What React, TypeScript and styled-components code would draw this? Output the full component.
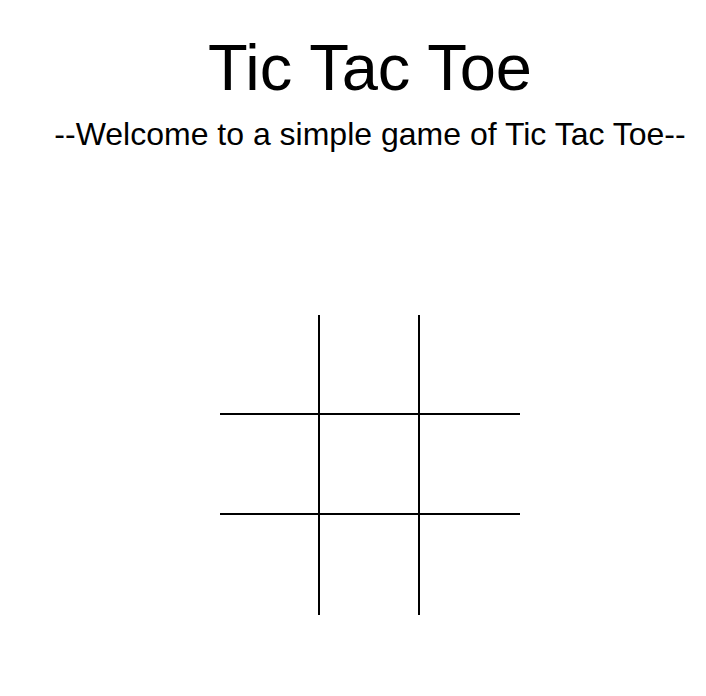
import React from "react";
import styled, { createGlobalStyle } from "styled-components";

const Global = createGlobalStyle`
  html, body { margin: 0; padding: 0; background: #fff; overflow: hidden; }
  body { font-family: "Liberation Sans", Arial, sans-serif; color: #000; }
`;

const Page = styled.div`
  width: 740px;
  display: flex;
  flex-direction: column;
  align-items: center;
  padding-top: 32px;
`;

const Title = styled.h1`
  margin: 0;
  font-size: 65px;
  font-weight: 400;
  line-height: 72px;
`;

const Subtitle = styled.p`
  margin: 12px 0 0;
  font-size: 32px;
  line-height: 36px;
  white-space: nowrap;
`;

const Board = styled.div`
  margin-top: 163px;
  display: grid;
  grid-template-columns: repeat(3, 100px);
  grid-template-rows: repeat(3, 100px);
`;

const Cell = styled.div<{ $right: boolean; $bottom: boolean }>`
  box-sizing: border-box;
  border-right: ${(p) => (p.$right ? "2px solid #000" : "none")};
  border-bottom: ${(p) => (p.$bottom ? "2px solid #000" : "none")};
  cursor: pointer;
`;

export default function App() {
  const cells = Array.from({ length: 9 }, (_, i) => i);
  return (
    <>
      <Global />
      <Page>
        <Title>Tic Tac Toe</Title>
        <Subtitle>--Welcome to a simple game of Tic Tac Toe--</Subtitle>
        <Board>
          {cells.map((i) => (
            <Cell key={i} $right={i % 3 !== 2} $bottom={i < 6} />
          ))}
        </Board>
      </Page>
    </>
  );
}
